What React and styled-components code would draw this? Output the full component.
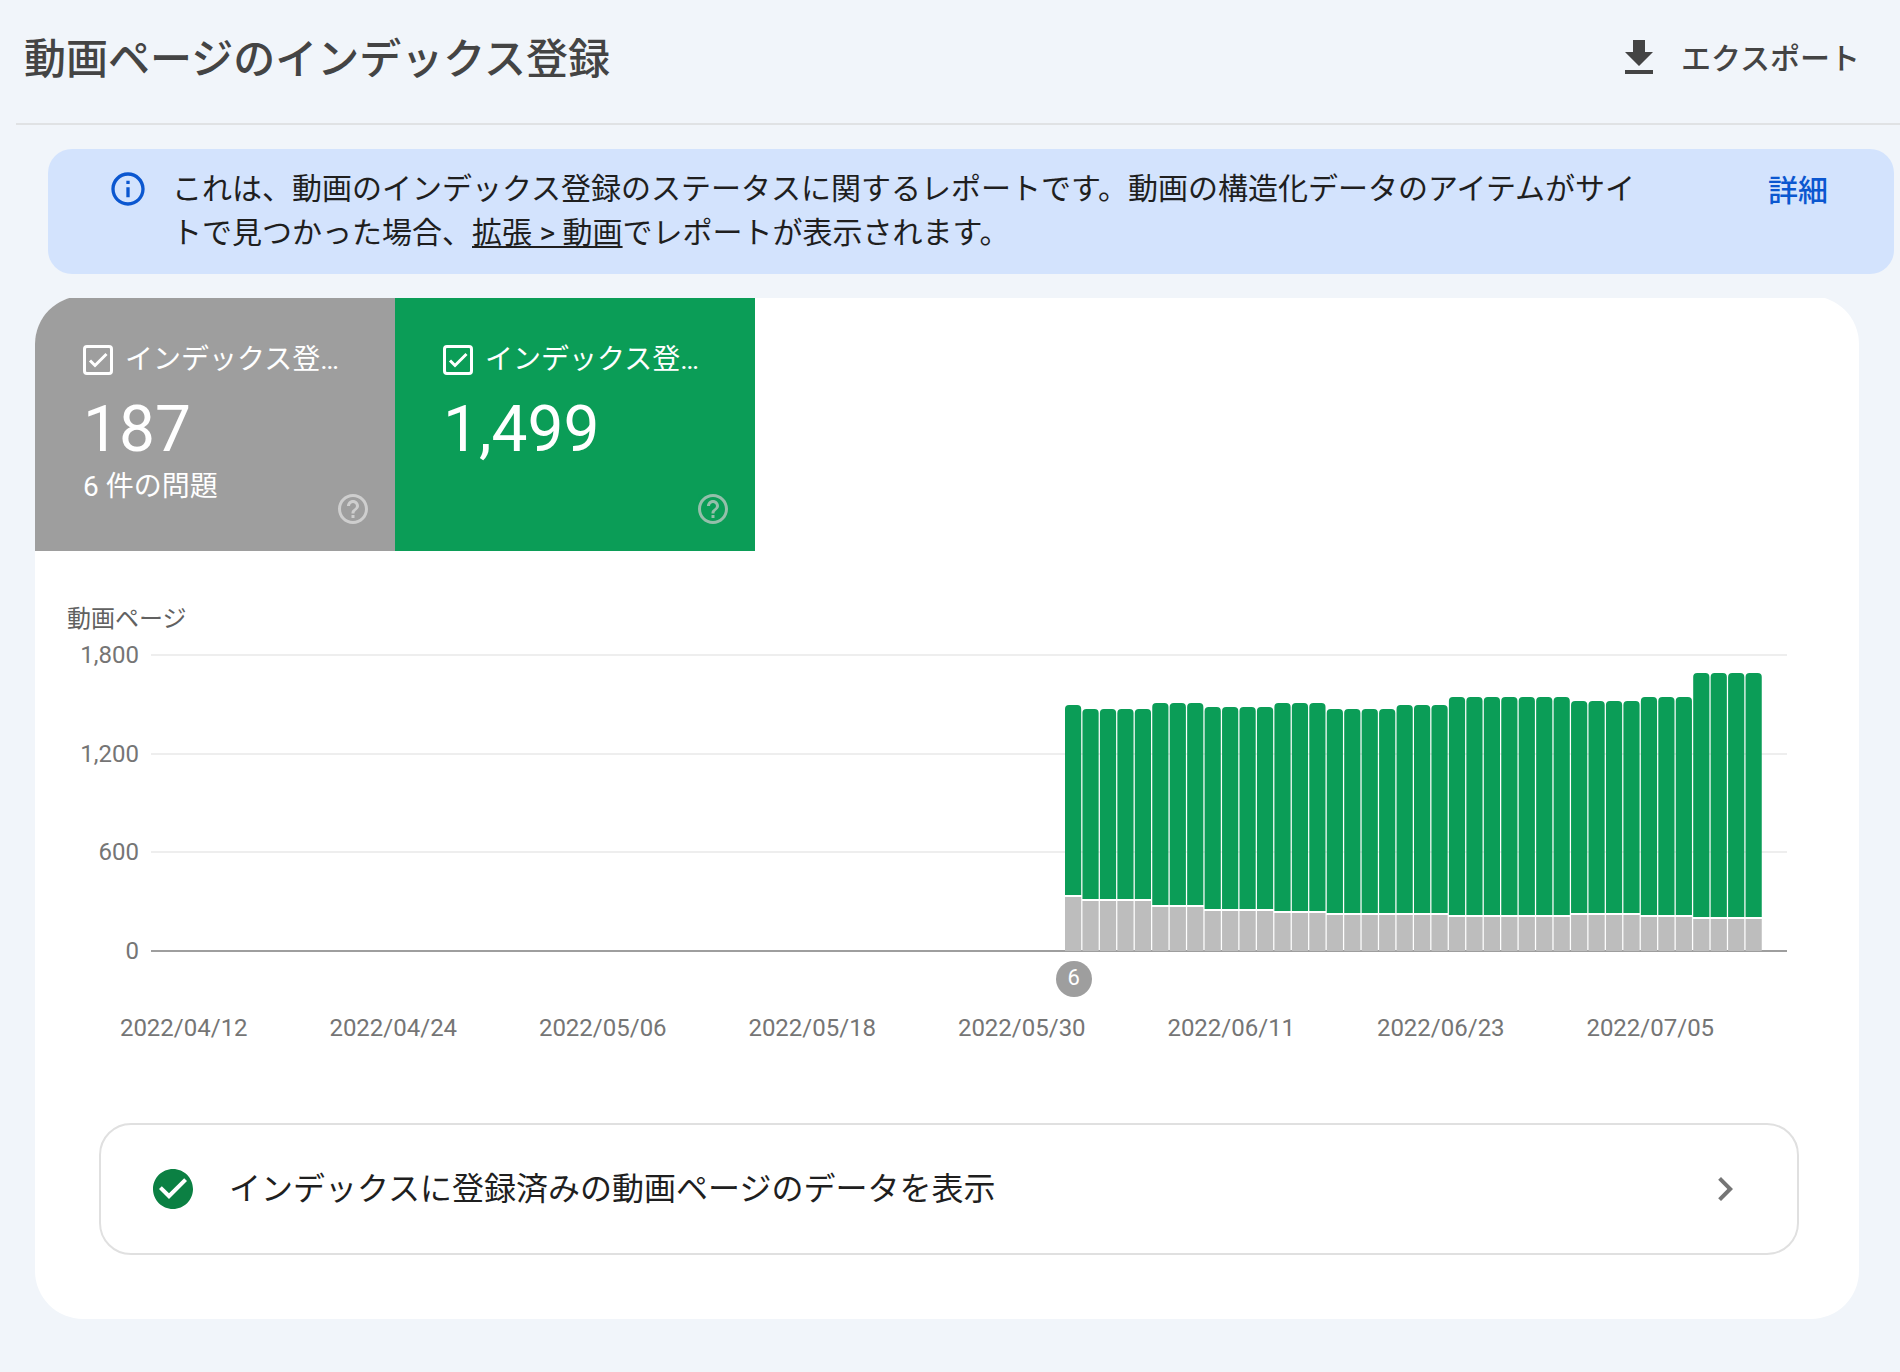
import React, { useState } from 'react';
import styled, { createGlobalStyle } from 'styled-components';

const GlobalStyle = createGlobalStyle`
  * {
    box-sizing: border-box;
  }
  body {
    margin: 0;
    background: #f1f5fa;
    color: #1f1f1f;
    font-family: Roboto, 'Noto Sans CJK JP', sans-serif;
    font-size: 30px;
  }
  button {
    font: inherit;
    color: inherit;
    background: none;
    border: 0;
    padding: 0;
    cursor: pointer;
  }
`;

const Page = styled.main`
  min-height: 100vh;
  padding-bottom: 48px;
`;

const Header = styled.header`
  display: flex;
  align-items: flex-start;
  justify-content: space-between;
  margin-left: 16px;
  padding: 34px 40px 37px 8px;
  border-bottom: 2px solid #e0e2e4;
`;

const Title = styled.h1`
  margin: 0;
  font-size: 42px;
  font-weight: 500;
  line-height: 52px;
  color: #444;
`;

const ExportButton = styled.button`
  display: flex;
  align-items: flex-start;
  gap: 18px;
  line-height: 50px;
  font-weight: 500;
  color: #444;
`;

const Icon = styled.svg`
  display: block;
  flex: none;
  width: ${props => props.$size}px;
  height: ${props => props.$size}px;
  fill: currentColor;
`;

const Banner = styled.section`
  display: flex;
  align-items: flex-start;
  margin: 24px 6px 0 48px;
  padding: 18px 66px 19px 60px;
  border-radius: 24px;
  background: #d3e3fd;
  line-height: 44px;
  > svg {
    margin: 2px 24px 0 0;
    color: #0b57d0;
  }
`;

const BannerText = styled.p`
  flex: 1;
  margin: 0 106px 0 0;
  a {
    color: inherit;
    text-decoration-thickness: 2px;
    text-underline-offset: 3px;
  }
`;

const DetailLink = styled.a`
  margin-top: 2px;
  font-weight: 500;
  color: #0b57d0;
  text-decoration: none;
`;

const CardClip = styled.div`
  margin: 24px 41px 0 35px;
  overflow: hidden;
`;

const Card = styled.section`
  margin-top: -2px;
  padding: 2px 0 64px;
  border-radius: 48px;
  background: #fff;
  overflow: hidden;
`;

const Tiles = styled.div`
  display: flex;
`;

const Tile = styled.div`
  display: flex;
  width: 360px;
  min-height: 253px;
  padding: 44px 24px 24px 48px;
  background: ${props => props.$color};
  color: #fff;
  font-size: 28px;
`;

const TileBody = styled.div`
  flex: 1;
  min-width: 0;
`;

const TileLabel = styled.label`
  display: flex;
  align-items: center;
  gap: 12px;
  line-height: 36px;
  white-space: nowrap;
`;

const CheckBox = styled.span`
  position: relative;
  flex: none;
  width: 30px;
  height: 30px;
  input {
    appearance: none;
    display: block;
    width: 30px;
    height: 30px;
    margin: 0;
    border: 3px solid #fff;
    border-radius: 4px;
  }
  svg {
    position: absolute;
    inset: 0;
    fill: none;
    stroke: #fff;
    stroke-width: 3;
    pointer-events: none;
  }
  input:not(:checked) + svg {
    display: none;
  }
`;

const TileValue = styled.div`
  margin-top: 16px;
  font-size: 64px;
  line-height: 72px;
`;

const TileNote = styled.div`
  margin-top: 1px;
  line-height: 40px;
`;

const HelpButton = styled.button`
  align-self: flex-end;
  color: #cecece;
  opacity: ${props => props.$opacity};
`;

const ChartSection = styled.div`
  padding-top: 52px;
  font-size: 24px;
  color: #757575;
`;

const AxisTitle = styled.div`
  margin-left: 32px;
  line-height: 32px;
  color: #616161;
`;

const PlotRow = styled.div`
  display: flex;
  margin: 8px 72px 0 32px;
`;

const YLabels = styled.div`
  display: flex;
  flex-direction: column;
  justify-content: space-between;
  align-items: flex-end;
  width: 72px;
  height: 320px;
  margin-right: 12px;
  line-height: 24px;
`;

const Plot = styled.div`
  position: relative;
  flex: 1;
  margin-top: 11px;
  svg {
    display: block;
    width: 100%;
    height: 298px;
  }
`;

const Marker = styled.span`
  position: absolute;
  top: 307px;
  width: 36px;
  height: 36px;
  margin-left: -18px;
  border-radius: 50%;
  background: #9e9e9e;
  color: #fff;
  font-size: 22px;
  line-height: 34px;
  text-align: center;
`;

const XLabels = styled.div`
  display: grid;
  grid-template-columns: repeat(8, 1fr);
  margin: 49px 104px 0 44px;
  line-height: 32px;
  text-align: center;
`;

const RowWrapper = styled.div`
  margin: 79px 60px 0 64px;
`;

const DataRow = styled.button`
  display: flex;
  align-items: center;
  width: 100%;
  min-height: 132px;
  padding: 0 48px;
  border: 2px solid #e0e0e0;
  border-radius: 32px;
  font-size: 32px;
  line-height: 40px;
  text-align: left;
  span {
    flex: 1;
    margin-left: 32px;
  }
`;

const PATHS = {
  download: 'M19 9h-4V3H9v6H5l7 7 7-7zM5 18v2h14v-2H5z',
  info: 'M11 7h2v2h-2zm0 4h2v6h-2zm1-9C6.48 2 2 6.48 2 12s4.48 10 10 10 10-4.48 10-10S17.52 2 12 2zm0 18c-4.41 0-8-3.59-8-8s3.59-8 8-8 8 3.59 8 8-3.59 8-8 8z',
  help: 'M11 18h2v-2h-2v2zm1-16C6.48 2 2 6.48 2 12s4.48 10 10 10 10-4.48 10-10S17.52 2 12 2zm0 18c-4.41 0-8-3.59-8-8s3.59-8 8-8 8 3.59 8 8-3.59 8-8 8zm0-14c-2.21 0-4 1.79-4 4h2c0-1.1.9-2 2-2s2 .9 2 2c0 2-3 1.75-3 5h2c0-2.25 3-2.5 3-5 0-2.21-1.79-4-4-4z',
  checkCircle: 'M12 2C6.48 2 2 6.48 2 12s4.48 10 10 10 10-4.48 10-10S17.52 2 12 2zm-2 15l-5-5 1.41-1.41L10 14.17l7.59-7.59L19 8l-9 9z',
  chevron: 'M10 6L8.59 7.41 13.17 12l-4.58 4.59L10 18l6-6z',
};

const MaterialIcon = ({ name, size, color }) => (
  <Icon viewBox="0 0 24 24" $size={size} color={color} aria-hidden="true">
    <path d={PATHS[name]} />
  </Icon>
);

// [days, not indexed, total]
const RUNS = [
  [1, 328, 1496],
  [4, 304, 1472],
  [3, 268, 1508],
  [4, 243, 1484],
  [3, 231, 1508],
  [4, 219, 1472],
  [3, 219, 1496],
  [7, 207, 1545],
  [4, 219, 1520],
  [3, 207, 1545],
  [4, 194, 1691],
];
const DAYS = RUNS.flatMap(([days, grey, total]) => Array(days).fill({ grey, total }));

const DATES = [
  '2022/04/12',
  '2022/04/24',
  '2022/05/06',
  '2022/05/18',
  '2022/05/30',
  '2022/06/11',
  '2022/06/23',
  '2022/07/05',
];

const PLOT_WIDTH = 1636;
const BASE = 297;
const FIRST_BAR = 914;
const BAR_STEP = 17.45;
const BAR_WIDTH = 16.2;

const toHeight = value => Math.round((value / 1800) * 148) * 2;

const Bar = ({ x, grey, total }) => {
  const greyTop = BASE - toHeight(grey);
  const top = BASE - toHeight(total);
  return (
    <g>
      <rect x={x} y={greyTop - 2} width={BAR_WIDTH} height={2} fill="#fff" />
      <rect x={x} y={greyTop} width={BAR_WIDTH} height={BASE - greyTop} fill="#bdbdbd" />
      <path
        d={`M${x} ${greyTop - 2}V${top + 4}q0 -4 4 -4h${BAR_WIDTH - 8}q4 0 4 4V${greyTop - 2}z`}
        fill="#0b9d57"
      />
    </g>
  );
};

const Chart = () => (
  <ChartSection>
    <AxisTitle>動画ページ</AxisTitle>
    <PlotRow>
      <YLabels>
        <span>1,800</span>
        <span>1,200</span>
        <span>600</span>
        <span>0</span>
      </YLabels>
      <Plot>
        <svg viewBox={`0 0 ${PLOT_WIDTH} 298`} preserveAspectRatio="none" role="img" aria-label="動画ページ">
          {[0, 99, 197].map(y => (
            <rect key={y} x="0" y={y} width={PLOT_WIDTH} height="2" fill="#eee" />
          ))}
          <rect x="0" y="296" width={PLOT_WIDTH} height="2" fill="#9e9e9e" />
          {DAYS.map((day, i) => (
            <Bar key={i} x={FIRST_BAR + i * BAR_STEP} {...day} />
          ))}
        </svg>
        <Marker style={{ left: `${((FIRST_BAR + BAR_STEP / 2) / PLOT_WIDTH) * 100}%` }}>6</Marker>
      </Plot>
    </PlotRow>
    <XLabels>
      {DATES.map(date => (
        <span key={date}>{date}</span>
      ))}
    </XLabels>
  </ChartSection>
);

const MetricTile = ({ id, color, label, value, note, helpOpacity }) => {
  const [checked, setChecked] = useState(true);
  return (
    <Tile $color={color}>
      <TileBody>
        <TileLabel htmlFor={id}>
          <CheckBox>
            <input id={id} type="checkbox" checked={checked} onChange={() => setChecked(!checked)} />
            <svg viewBox="0 0 30 30" aria-hidden="true">
              <path d="M7 15.5L12 20.5L23.5 9" />
            </svg>
          </CheckBox>
          {label}
        </TileLabel>
        <TileValue>{value}</TileValue>
        {note && <TileNote>{note}</TileNote>}
      </TileBody>
      <HelpButton type="button" aria-label="ヘルプ" $opacity={helpOpacity}>
        <MaterialIcon name="help" size={36} />
      </HelpButton>
    </Tile>
  );
};

const App = () => (
  <Page lang="ja">
    <GlobalStyle />
    <Header>
      <Title>動画ページのインデックス登録</Title>
      <ExportButton type="button">
        <MaterialIcon name="download" size={48} />
        エクスポート
      </ExportButton>
    </Header>
    <Banner>
      <MaterialIcon name="info" size={40} />
      <BannerText>
        これは、動画のインデックス登録のステータスに関するレポートです。動画の構造化データのアイテムがサイトで見つかった場合、<a href="#video">拡張 &gt; 動画</a>でレポートが表示されます。
      </BannerText>
      <DetailLink href="#details">詳細</DetailLink>
    </Banner>
    <CardClip>
      <Card>
        <Tiles>
          <MetricTile
            id="not-indexed"
            color="#9e9e9e"
            label="インデックス登…"
            value="187"
            note="6 件の問題"
            helpOpacity={1}
          />
          <MetricTile id="indexed" color="#0b9d57" label="インデックス登…" value="1,499" helpOpacity={0.7} />
        </Tiles>
        <Chart />
        <RowWrapper>
          <DataRow type="button">
            <MaterialIcon name="checkCircle" size={48} color="#0b8043" />
            <span>インデックスに登録済みの動画ページのデータを表示</span>
            <MaterialIcon name="chevron" size={48} color="#757575" />
          </DataRow>
        </RowWrapper>
      </Card>
    </CardClip>
  </Page>
);

export default App;
